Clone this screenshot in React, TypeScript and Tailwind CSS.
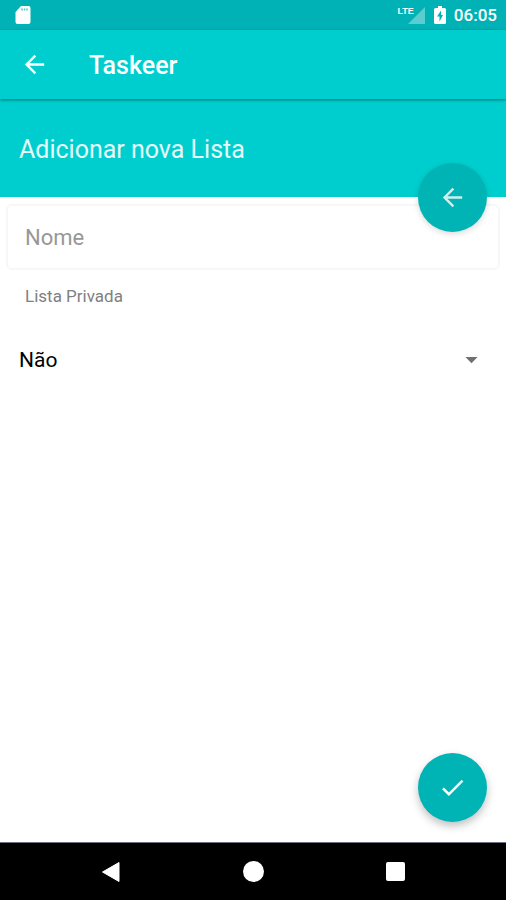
import { MdArrowBack, MdArrowDropDown, MdCheck } from 'react-icons/md';

function StatusBar() {
  return (
    <div className="bg-[#00b2b5] h-[30px] pl-[15px] pr-[9px] flex items-center justify-between text-white">
      <svg className="w-4 h-5" viewBox="0 0 16 20" fill="none">
        <path d="M6 1h7.500a2 2 0 0 1 2 2v14a2 2 0 0 1-2 2H2.500a2 2 0 0 1-2-2V7z" fill="#fff" />
        <path d="M7 3.500v2M9.500 3.500v2M12 3.500v2" stroke="#00b2b5" strokeWidth="1.500" opacity="0.700" />
      </svg>
      <div className="flex items-center">
        <div className="flex items-start">
          <span className="font-['Liberation_Sans_Narrow','Liberation_Sans',sans-serif] text-[9px] leading-[10px] font-bold -mr-[6px]">LTE</span>
          <svg className="w-[17px] h-[18px]" viewBox="0 0 17 18">
            <path d="M17 1v17H0z" fill="#fff" opacity="0.350" />
          </svg>
        </div>
        <svg className="w-3 h-[18px] ml-[9px] mr-2" viewBox="0 0 12 18">
          <path d="M4 0h4v2h2.500A1.500 1.500 0 0 1 12 3.500v13a1.500 1.500 0 0 1-1.500 1.500h-9A1.500 1.500 0 0 1 0 16.500v-13A1.500 1.500 0 0 1 1.500 2H4z" fill="#fff" />
          <path d="M7 4.500 3 10.500h2.500V15.500L9 9H7z" fill="#00b2b5" />
        </svg>
        <span className="text-[17px] leading-5 font-medium">06:05</span>
      </div>
    </div>
  );
}

function Toolbar() {
  return (
    <header className="relative z-20 bg-[#00cece] h-[69px] px-5 flex items-center text-white shadow-[0_1px_3px_rgba(0,0,0,0.45)]">
      <button type="button" aria-label="Voltar">
        <MdArrowBack className="text-[29px]" />
      </button>
      <h1 className="ml-10 pt-[2px] text-[25px] font-medium">Taskeer</h1>
    </header>
  );
}

function NavBar() {
  return (
    <nav className="bg-black h-[58px] px-10 flex items-center border-t border-gray-500">
      <button type="button" aria-label="Voltar" className="flex-1 flex justify-center">
        <svg className="w-5 h-[22px]" viewBox="0 0 20 22">
          <path d="M18 1.500v19L1.500 11z" fill="#fff" stroke="#fff" strokeLinejoin="round" />
        </svg>
      </button>
      <button type="button" aria-label="Início" className="flex-1 flex justify-center">
        <span className="w-[21px] h-[21px] rounded-full bg-white" />
      </button>
      <button type="button" aria-label="Recentes" className="flex-1 flex justify-center">
        <span className="w-[19px] h-[19px] rounded-[2px] bg-white" />
      </button>
    </nav>
  );
}

export default function App() {
  return (
    <div className="min-h-screen flex flex-col bg-white font-[Roboto,sans-serif]">
      <StatusBar />
      <Toolbar />

      <section className="relative z-10 bg-[#00cece] h-[98px] px-[19px] flex items-center">
        <h2 className="pt-[3px] text-[25px] text-white/90">Adicionar nova Lista</h2>
        <button
          type="button"
          aria-label="Fechar"
          className="absolute right-[19px] -bottom-[35px] w-[69px] h-[69px] rounded-full bg-[#00b4b6] text-white/80 flex items-center justify-center shadow-[0_2px_6px_rgba(0,0,0,0.15)]"
        >
          <MdArrowBack className="text-[29px]" />
        </button>
      </section>

      <main className="relative flex-1 px-[6px] pt-[7px]">
        <input
          type="text"
          aria-label="Nome"
          placeholder="Nome"
          className="block w-full h-[66px] px-[17px] rounded-md border-2 border-[#f7f7f7] text-[22px] text-black placeholder:text-[#979797] outline-none"
        />
        <label htmlFor="privada" className="block mt-[14px] px-[19px] text-[17px] leading-6 text-[#808080]">
          Lista Privada
        </label>
        <div className="relative mt-[29px] mx-[13px]">
          <select id="privada" defaultValue="nao" className="block w-full h-12 appearance-none bg-transparent text-[21px] text-black">
            <option value="nao">Não</option>
            <option value="sim">Sim</option>
          </select>
          <MdArrowDropDown className="absolute right-px top-2 text-[29px] text-[#707070] pointer-events-none" />
        </div>

        <button
          type="button"
          aria-label="Salvar"
          className="absolute right-[19px] bottom-5 w-[69px] h-[69px] rounded-full bg-[#00b4b6] text-white flex items-center justify-center shadow-[0_4px_8px_rgba(0,0,0,0.25)]"
        >
          <MdCheck className="text-[29px]" />
        </button>
      </main>

      <NavBar />
    </div>
  );
}
